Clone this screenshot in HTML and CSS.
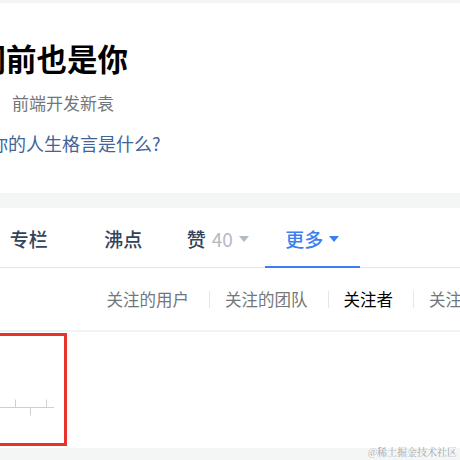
FILE: index.html
```html
<!DOCTYPE html>
<html lang="zh-CN">
<head>
  <meta charset="UTF-8">
  <title>用户主页</title>
  <link rel="stylesheet" href="styles.css">
</head>
<body>
  <div class="page">
    <section class="profile">
      <h1 class="name">同前也是你</h1>
      <div class="job">前端开发新袁</div>
      <div class="motto">你的人生格言是什么?</div>
    </section>

    <section class="list">
      <nav class="tabs">
        <div class="tab">专栏</div>
        <div class="tab">沸点</div>
        <div class="tab">赞 <span class="count">40</span><i class="caret"></i></div>
        <div class="tab active">更多<i class="caret"></i></div>
      </nav>

      <div class="subtabs">
        <span class="sub">关注的用户</span>
        <span class="sep"></span>
        <span class="sub">关注的团队</span>
        <span class="sep"></span>
        <span class="sub current">关注者</span>
        <span class="sep"></span>
        <span class="sub">关注标签</span>
      </div>

      <div class="content">
        <div class="highlight">
          <svg class="ruler" width="60" height="20" viewBox="0 0 60 20">
            <path d="M0 8.5H54M15.5 0.5V8.5M46.5 0.5V8.5M30.5 8.5V16.5" stroke="#ccd1d7" stroke-width="1" fill="none"/>
          </svg>
        </div>
      </div>
    </section>
  </div>
  <div class="watermark">@稀土掘金技术社区</div>
</body>
</html>
```

FILE: styles.css
```css
body {
  margin: 0;
  background: #f4f5f5;
  font-family: "Noto Sans CJK SC", "Noto Sans", sans-serif;
  overflow: hidden;
  width: 460px;
  height: 460px;
  position: relative;
}
.page {
  padding-top: 3px;
}
.profile {
  background: #fff;
  height: 190px;
  margin-bottom: 15px;
  overflow: hidden;
}
.name {
  margin: 34px 0 0 -24.5px;
  font-size: 30.5px;
  font-weight: 700;
  line-height: 42px;
  color: #000;
  white-space: nowrap;
}
.job {
  margin: 12px 0 0 12px;
  font-size: 17px;
  line-height: 24px;
  color: #72777b;
}
.motto {
  margin: 16px 0 0 -10px;
  font-size: 18px;
  line-height: 24px;
  color: #406599;
  white-space: nowrap;
}
.list {
  background: #fff;
  height: 240px;
  overflow: hidden;
}
.tabs {
  display: flex;
  height: 59px;
  border-bottom: 1px solid #e4e6eb;
  margin-left: -18.5px;
}
.tab {
  width: 94.5px;
  flex: none;
  display: flex;
  align-items: center;
  justify-content: center;
  font-size: 19px;
  font-weight: 500;
  color: #31445b;
  box-sizing: border-box;
  padding-top: 2px;
}
.tab .count {
  color: #b2bac2;
  font-weight: 400;
  margin-left: 6px;
}
.caret {
  display: inline-block;
  width: 0;
  height: 0;
  border-left: 5.5px solid transparent;
  border-right: 5.5px solid transparent;
  border-top: 6px solid #b2bac2;
  margin-left: 6px;
}
.tab.active {
  color: #3b7ff0;
  border-bottom: 2px solid #3b7ff0;
  margin-bottom: -1px;
  padding-top: 3px;
}
.tab.active .caret {
  border-top-color: #3b7ff0;
}
.subtabs {
  display: flex;
  align-items: center;
  height: 62px;
  padding-left: 106.5px;
  border-bottom: 2px solid #f1f2f3;
  white-space: nowrap;
}
.sub {
  font-size: 16.5px;
  color: #72777b;
}
.sub.current {
  color: #000;
}
.sep {
  width: 1px;
  height: 17px;
  background: #e5e6eb;
  margin: 0 15px 0 20px;
  flex: none;
}
.content {
  padding-top: 1px;
}
.highlight {
  width: 84px;
  height: 107px;
  margin-left: -23px;
  border: 3px solid #e8322b;
  position: relative;
}
.ruler {
  position: absolute;
  left: 20px;
  top: 63px;
}
.watermark {
  position: absolute;
  right: 3px;
  bottom: 1px;
  font-size: 10px;
  color: #a6a8aa;
  font-family: "Noto Serif CJK SC", "Noto Sans CJK SC", serif;
}
```
